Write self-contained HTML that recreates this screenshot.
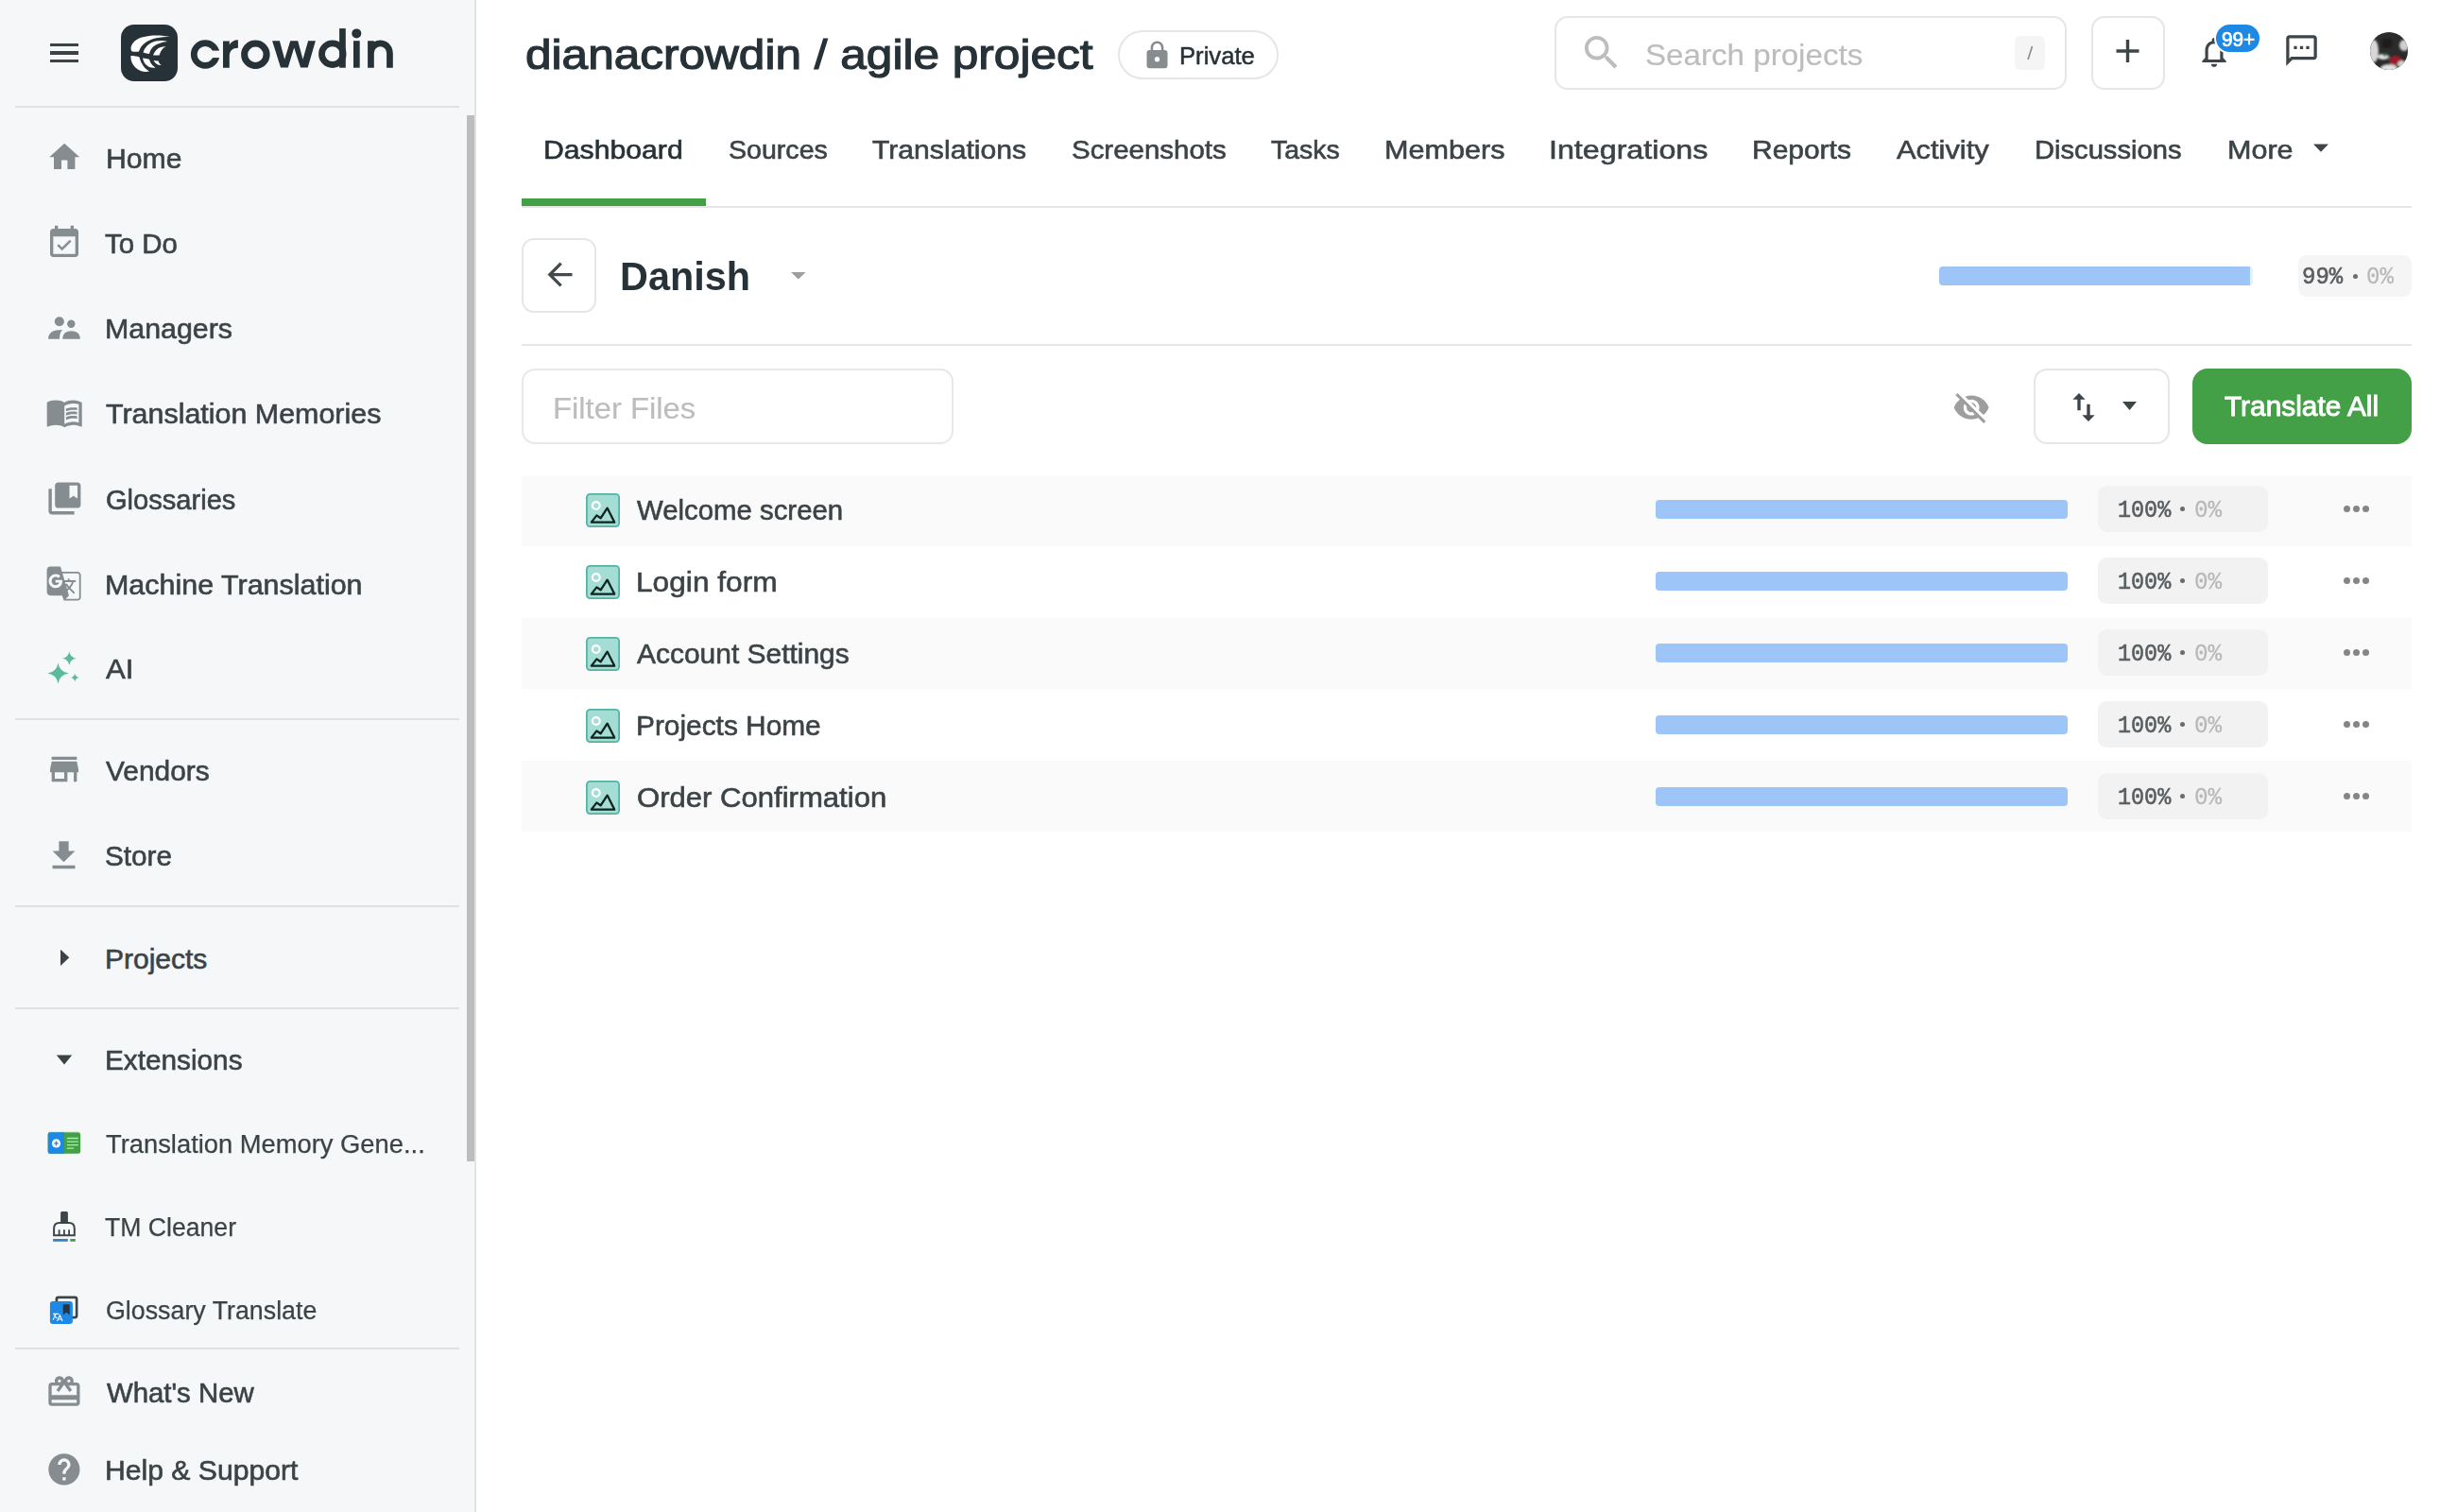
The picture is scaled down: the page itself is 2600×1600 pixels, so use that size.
<!DOCTYPE html>
<html><head><meta charset="utf-8">
<style>
html,body{margin:0;padding:0;width:2600px;height:1600px;overflow:hidden;background:#fff;font-family:"Liberation Sans",sans-serif}
.a{position:absolute}
.tx{position:absolute;white-space:pre;transform-origin:0 0}
svg{position:absolute;overflow:visible}
</style></head><body>
<!-- sidebar -->
<div class="a" style="left:0;top:0;width:502px;height:1600px;background:#f5f7f8"></div>
<div class="a" style="left:502px;top:0;width:2px;height:1600px;background:#e0e2e3"></div>
<div class="a" style="left:494px;top:122px;width:8px;height:1107px;background:#bdbdbd"></div>
<!-- separators -->
<div class="a" style="left:16px;top:112px;width:470px;height:2px;background:#dfe1e3"></div>
<div class="a" style="left:16px;top:760px;width:470px;height:2px;background:#dfe1e3"></div>
<div class="a" style="left:16px;top:958px;width:470px;height:2px;background:#dfe1e3"></div>
<div class="a" style="left:16px;top:1066px;width:470px;height:2px;background:#dfe1e3"></div>
<div class="a" style="left:16px;top:1426px;width:470px;height:2px;background:#dfe1e3"></div>
<!-- hamburger -->
<div class="a" style="left:53px;top:46px;width:30px;height:3px;background:#3b4347"></div>
<div class="a" style="left:53px;top:54.3px;width:30px;height:3.3px;background:#3b4347"></div>
<div class="a" style="left:53px;top:63px;width:30px;height:3px;background:#3b4347"></div>
<!-- logo -->
<svg style="left:128px;top:26px" width="60" height="60" viewBox="0 0 60 60">
<rect width="60" height="60" rx="14" fill="#263238"/>
<g fill="#fff">
<path d="M11,28 C9,22 14,16 22,13.5 C32,10.5 44,11 52,13 C42,13 32,14.5 26,19 C22,22 20,25 19,28.5 C16,29 13,29 11,28 Z"/>
<path d="M10.5,33 C14,33 17,33.5 19.5,34.5 C21,40 24,46 30,49.5 C26,50.5 20,50 16,46 C11.5,42 10,37 10.5,33 Z"/>
<path d="M23.5,29.5 C25,24 30,19 37,17.5 C42,16.5 46,17 49,18 C44,18.5 38,20 34,23.5 C31.5,26 30.5,28.5 30,31 C28,30.8 25.5,30.3 23.5,29.5 Z"/>
<path d="M23,35.5 C25.5,35.8 28,36.3 30,36.8 C31,41 33.5,44 36.5,45.5 C33,46.5 29,45 26.5,42.5 C24.5,40.5 23.5,38 23,35.5 Z"/>
<path d="M34,32.5 C35.5,28 38.5,25 42,24 C44,23.2 46,23 47.5,23.2 C44.5,24.5 42,27.5 40.5,32.5 Z"/>
<path d="M34.5,38 L39.5,38.5 C40.5,41 41.5,42.5 43,43 C40,43.5 36,41.5 34.5,38 Z"/>
</g></svg>
<svg style="left:0;top:0" width="1" height="1"><g fill="#263238">
<circle cx="217.2" cy="57.5" r="11.95" fill="none" stroke="#263238" stroke-width="6.7"/>
<rect x="220" y="53.6" width="14" height="7.5" fill="#f5f7f8"/>
<path d="M236,71.8 V43.4 H242.8 V47.6 C244.6,44.2 247.6,42.2 251.9,42.2 V50.8 C246,50.8 242.8,53.8 242.8,59.5 V71.8 Z"/>
<circle cx="270.35" cy="57.7" r="11.72" fill="none" stroke="#263238" stroke-width="7.05"/>
<path d="M288.1,43.2 L295.9,43.2 L301.2,62.8 L307.2,43.2 L315.2,43.2 L320.5,62.8 L326.1,43.2 L333.9,43.2 L325.7,71.6 L318.1,71.6 L311.2,50.5 L304.8,71.6 L297,71.6 Z"/>
<circle cx="351.8" cy="57.2" r="11.3" fill="none" stroke="#263238" stroke-width="6.8"/>
<rect x="359.1" y="30.1" width="6.7" height="41.6"/>
<rect x="374" y="43.2" width="6.7" height="28.5"/><circle cx="377.3" cy="35.4" r="5"/>
<path d="M389.1,43.2 H395.8 V44.3 A13.35,13.35 0 0 1 415.8,55.9 V71.7 H409.1 V55.9 A6.65,6.65 0 0 0 395.8,55.9 V71.7 H389.1 Z"/>
</g></svg>
<!-- sidebar icons -->
<svg style="left:48.8px;top:147.2px" width="38.4" height="38.4" viewBox="0 0 24 24"><path fill="#858d91" d="M10 20v-6h4v6h5v-8h3L12 3 2 12h3v8z"/></svg>
<svg style="left:48px;top:236.8px" width="40" height="40" viewBox="0 0 24 24"><path fill="#858d91" d="M16.53 11.06L15.47 10l-4.88 4.88-2.12-2.12-1.06 1.06L10.59 17l5.94-5.94zM19 3h-1V1h-2v2H8V1H6v2H5c-1.11 0-1.99.9-1.99 2L3 19c0 1.1.89 2 2 2h14c1.1 0 2-.9 2-2V5c0-1.1-.9-2-2-2zm0 16H5V8h14v11z"/></svg>
<svg style="left:0;top:0" width="1" height="1"><g fill="#858d91"><circle cx="62.8" cy="340.2" r="5"/><circle cx="75.3" cy="342.8" r="4.2"/><path d="M51.1,358.7 C51.1,352 56,349 66,349 C63.5,351.5 63,355 63,358.7 Z"/><path d="M66.2,358.7 C66.2,353 70,350.2 75.5,350.2 C81,350.2 84.8,353 84.8,358.7 Z"/></g></svg>
<svg style="left:48.3px;top:416px" width="40.4" height="40.4" viewBox="0 0 24 24"><path fill="#858d91" d="M21 5c-1.11-.35-2.33-.5-3.5-.5-1.950 0-4.05.4-5.5 1.5-1.45-1.1-3.55-1.5-5.5-1.5S2.45 4.9 1 6v14.65c0 .25.25.5.5.5.1 0 .15-.05.25-.05C3.1 20.450 5.050 20 6.500 20c1.95 0 4.05.4 5.5 1.5 1.35-.85 3.8-1.5 5.5-1.5 1.65 0 3.35.3 4.75 1.050.1.050.15.050.25.050.25 0 .5-.25.5-.5V6c-.6-.45-1.25-.75-2-1zm0 13.5c-1.1-.35-2.3-.5-3.5-.5-1.7 0-4.15.65-5.5 1.5V8c1.35-.85 3.8-1.5 5.5-1.5 1.2 0 2.4.15 3.5.5v11.5zM17.5 10.5c.88 0 1.73.09 2.5.26V9.24c-.79-.15-1.64-.24-2.5-.24-1.7 0-3.24.29-4.5.83v1.66c1.13-.64 2.7-.99 4.5-.99zM13 12.49v1.66c1.13-.64 2.7-.99 4.5-.99.88 0 1.73.09 2.5.26V11.9c-.79-.15-1.64-.24-2.5-.24-1.7 0-3.24.3-4.5.83zM17.5 14.33c-1.7 0-3.24.29-4.5.83v1.66c1.13-.64 2.7-.99 4.5-.99.88 0 1.73.09 2.5.26v-1.52c-.79-.16-1.64-.24-2.5-.24z"/></svg>
<svg style="left:47.6px;top:506.6px" width="40.8" height="40.8" viewBox="0 0 24 24"><path fill="#858d91" d="M4 6H2v14c0 1.1.9 2 2 2h14v-2H4V6zm16-4H8c-1.1 0-2 .9-2 2v12c0 1.1.9 2 2 2h12c1.1 0 2-.9 2-2V4c0-1.1-.9-2-2-2zm0 10l-2.5-1.5L15 12V4h5v8z"/></svg>
<svg style="left:46.4px;top:595.6px" width="43.2" height="43.2" viewBox="0 0 24 24"><path fill="#858d91" d="M20 5h-9.12L10 2H4c-1.1 0-2 .9-2 2v13c0 1.1.9 2 2 2h7l1 3h8c1.1 0 2-.9 2-2V7c0-1.1-.9-2-2-2zM7.17 14.59c-2.25 0-4.09-1.83-4.09-4.09s1.83-4.090 4.09-4.09c1.04 0 1.99.37 2.74 1.07l.07.06-1.23 1.18-.06-.05c-.29-.27-.78-.59-1.52-.59-1.31 0-2.38 1.09-2.38 2.42s1.07 2.42 2.38 2.42c1.37 0 1.96-.87 2.12-1.46H7.08V9.91h3.95l.01.07c.04.21.05.4.05.61 0 2.35-1.61 4-3.92 4zm6.03-1.71c.33.6.74 1.18 1.19 1.7l-.54.53-.65-2.23zm.77-.76h-.99l-.31-1.04h3.99s-.34 1.31-1.56 2.74c-.52-.62-.89-1.23-1.13-1.7zM21 20c0 .55-.45 1-1 1h-7l2-2-.81-2.77.92-.92L17.79 18l.73-.73-2.71-2.68c.9-1.03 1.6-2.25 1.92-3.51H19v-1.04h-3.64V9h-1.04v1.04h-1.96L11.18 6H20c.55 0 1 .45 1 1v13z"/></svg>
<svg style="left:0;top:0" width="1" height="1"><g fill="#5cb99b">
<path d="M61.5,701.4 Q63,711 72.8,712.4 Q63,713.8 61.5,723.4 Q60,713.8 50.3,712.4 Q60,711 61.5,701.4 Z"/>
<path d="M73.3,689.5 Q74.3,695.8 80.7,696.8 Q74.3,697.8 73.3,704 Q72.3,697.8 66,696.8 Q72.3,695.8 73.3,689.5 Z"/>
<path d="M79.2,712.5 Q79.8,716.3 83.6,716.9 Q79.8,717.5 79.2,721.3 Q78.6,717.5 74.9,716.9 Q78.6,716.3 79.2,712.5 Z"/>
</g></svg>
<svg style="left:48px;top:794.3px" width="40" height="40" viewBox="0 0 24 24"><path fill="#858d91" d="M20 4H4v2h16V4zm1 10v-2l-1-5H4l-1 5v2h1v6h10v-6h4v6h2v-6h1zm-9 4H6v-4h6v4z"/></svg>
<svg style="left:47.4px;top:884.5px" width="41" height="41" viewBox="0 0 24 24"><path fill="#858d91" d="M19 9h-4V3H9v6H5l7 7 7-7zM5 18v2h14v-2H5z"/></svg>
<svg style="left:0;top:0" width="1" height="1"><path fill="#3b4347" d="M64,1004.7 L73.3,1013.3 L64,1022 Z"/><path fill="#3b4347" d="M59.8,1116.6 L76.2,1116.6 L68,1126.4 Z"/></svg>
<!-- extension icons -->
<svg style="left:0;top:0" width="1" height="1">
<rect x="50.7" y="1198.3" width="34.4" height="22.4" rx="2.2" fill="#43a047"/>
<path d="M52.9,1198.3 H67.9 V1220.7 H52.9 A2.2,2.2 0 0 1 50.7,1218.5 V1200.5 A2.2,2.2 0 0 1 52.9,1198.3 Z" fill="#1e88e5"/>
<path d="M51.5,1197.6 H84.3" stroke="#cfe3cf" stroke-width="1" opacity="0.6"/>
<circle cx="59.5" cy="1209.9" r="4.6" fill="#f2fbff"/><path d="M57.3,1209.9 h4.4 M59.5,1207.6 v4.6" stroke="#3a7bc8" stroke-width="1.3"/>
<path d="M70.9,1204.5 h11.9 M70.9,1208.2 h11.9 M70.9,1211.6 h11.9 M70.9,1215.1 h7.1" stroke="#a8f0a3" stroke-width="1.3"/>
</svg>
<svg style="left:0;top:0" width="1" height="1">
<rect x="64.1" y="1282" width="7.8" height="12" rx="1.5" fill="#3c4547"/>
<path d="M57.1,1307.3 V1300 C57.1,1296 59.5,1293.9 63,1293.9 H73 C76.5,1293.9 78.8,1296 78.8,1300 V1307.3 Z" fill="#f7f9fa" stroke="#3c4547" stroke-width="2"/>
<path d="M62.6,1307 v-5.8 M67.9,1307 v-5.8 M73.1,1307 v-5.8" stroke="#3c4547" stroke-width="1.8"/>
<rect x="56.1" y="1311" width="15.7" height="2.8" fill="#3a82bf"/><rect x="74.3" y="1311" width="5.5" height="2.8" fill="#4e9a52"/>
</svg>
<svg style="left:0;top:0" width="1" height="1">
<rect x="59.9" y="1372.9" width="21.2" height="21.2" rx="1.8" fill="#fff" stroke="#3c4547" stroke-width="2.7"/>
<rect x="52.9" y="1377.1" width="24" height="23.9" rx="3" fill="#1e88e5"/>
<path d="M66.7,1380.2 h7 v11.4 l-3.5,-2.8 l-3.5,2.8 Z" fill="#263545"/>
<path d="M56,1390.3 h6.2 M59.1,1390.3 l-3,6.5 M57,1392 l3.2,3 M60.5,1398 l2.8,-6.2 l2.8,6.2 M61.5,1396 h3.6" stroke="#e8f6ff" stroke-width="1.2" fill="none"/>
</svg>
<svg style="left:48px;top:1453.2px" width="39.8" height="39.8" viewBox="0 0 24 24"><path fill="#858d91" d="M20 6h-2.18c.11-.31.18-.65.18-1 0-1.66-1.34-3-3-3-1.05 0-1.96.54-2.5 1.35l-.5.67-.5-.68C10.96 2.54 10.05 2 9 2 7.34 2 6 3.34 6 5c0 .35.07.69.18 1H4c-1.11 0-1.99.89-1.99 2L2 19c0 1.11.89 2 2 2h16c1.11 0 2-.89 2-2V8c0-1.110-.89-2-2-2zm-5-2c.55 0 1 .45 1 1s-.45 1-1 1-1-.45-1-1 .45-1 1-1zM9 4c.55 0 1 .45 1 1s-.45 1-1 1-1-.45-1-1 .45-1 1-1zm11 15H4v-2h16v2zm0-5H4V8h5.08L7 10.83 8.62 12 11 8.76l1-1.36 1 1.36L15.38 12 17 10.83 14.92 8H20v6z"/></svg>
<svg style="left:48px;top:1535px" width="39.8" height="39.8" viewBox="0 0 24 24"><path fill="#858d91" d="M12 2C6.48 2 2 6.48 2 12s4.48 10 10 10 10-4.48 10-10S17.52 2 12 2zm1 17h-2v-2h2v2zm2.07-7.75l-.9.92C13.45 12.9 13 13.5 13 15h-2v-.5c0-1.1.45-2.1 1.17-2.830l1.24-1.26c.37-.36.59-.86.59-1.41 0-1.1-.9-2-2-2s-2 .9-2 2H8c0-2.21 1.79-4 4-4s4 1.79 4 4c0 .88-.36 1.68-.93 2.25z"/></svg>

<!-- header -->
<div class="a" style="left:1183px;top:32px;width:166px;height:48px;border:2px solid #e6e6e6;border-radius:26px"></div>
<svg style="left:1207.7px;top:41.8px" width="33" height="33" viewBox="0 0 24 24"><path fill="#878c8e" d="M18 8h-1V6c0-2.76-2.24-5-5-5S7 3.24 7 6v2H6c-1.1 0-2 .9-2 2v10c0 1.1.9 2 2 2h12c1.1 0 2-.9 2-2V10c0-1.1-.9-2-2-2zm-6 9c-1.1 0-2-.9-2-2s.9-2 2-2 2 .9 2 2-.9 2-2 2zm3.1-9H8.9V6c0-1.71 1.39-3.1 3.1-3.1 1.71 0 3.1 1.39 3.1 3.1v2z"/></svg>
<div class="a" style="left:1645px;top:17px;width:538px;height:74px;border:2px solid #e6e6e6;border-radius:14px"></div>
<svg style="left:1671px;top:31.9px" width="47.3" height="47.3" viewBox="0 0 24 24"><path fill="#bdbdbd" d="M15.5 14h-.79l-.28-.27C15.41 12.59 16 11.11 16 9.5 16 5.91 13.09 3 9.5 3S3 5.91 3 9.5 5.91 16 9.5 16c1.61 0 3.09-.59 4.23-1.57l.27.28v.79l5 4.99L20.49 19l-4.99-5zm-6 0C7.01 14 5 11.99 5 9.5S7.01 5 9.5 5 14 7.01 14 9.5 11.99 14 9.5 14z"/></svg>
<div class="a" style="left:2132px;top:38px;width:32px;height:36px;background:#f5f5f5;border-radius:6px"></div>
<svg style="left:0;top:0" width="1" height="1"><path d="M2150.5,49 L2146,63" stroke="#8a8a8a" stroke-width="1.6"/></svg>
<div class="a" style="left:2212.5px;top:17px;width:74.5px;height:74px;border:2px solid #e6e6e6;border-radius:14px"></div>
<svg style="left:0;top:0" width="1" height="1"><path d="M2251.5,42 v24 M2239.5,54 h24" stroke="#3d4548" stroke-width="3.4"/></svg>
<svg style="left:2323.6px;top:36px" width="38" height="38" viewBox="0 0 24 24"><path fill="#3d4548" d="M12 22c1.1 0 2-.9 2-2h-4c0 1.1.9 2 2 2zm6-6v-5c0-3.07-1.64-5.64-4.5-6.32V4c0-.83-.67-1.5-1.5-1.5s-1.5.67-1.5 1.5v.68C7.63 5.36 6 7.92 6 11v5l-2 2v1h16v-1l-2-2zm-2 1H8v-6c0-2.48 1.51-4.5 4-4.5s4 2.02 4 4.5v6z"/></svg>
<div class="a" style="left:2343px;top:24px;width:50px;height:33px;background:#fff;border-radius:17px"></div>
<div class="a" style="left:2345px;top:26px;width:46px;height:29px;background:#1e88e5;border-radius:15px"></div>
<svg style="left:2415.8px;top:34.2px" width="39" height="39" viewBox="0 0 24 24"><path fill="#3d4548" d="M20 2H4c-1.1 0-1.99.9-1.99 2L2 22l4-4h14c1.1 0 2-.9 2-2V4c0-1.1-.9-2-2-2zm0 14H5.17l-.59.59-.58.58V4h16v12zM7 9h2v2H7zm4 0h2v2h-2zm4 0h2v2h-2z"/></svg>
<svg style="left:2508px;top:34px" width="40" height="40" viewBox="0 0 40 40"><defs><clipPath id="avc"><circle cx="20" cy="20" r="20"/></clipPath><filter id="avb"><feGaussianBlur stdDeviation="1.2"/></filter></defs><g clip-path="url(#avc)"><rect width="40" height="40" fill="#2b2b2b"/><g filter="url(#avb)"><ellipse cx="4" cy="20" rx="5" ry="12" fill="#d8d8d8"/><ellipse cx="14" cy="26" rx="6" ry="3" fill="#e6e6e6"/><ellipse cx="36" cy="14" rx="5" ry="6" fill="#cfcfcf"/><ellipse cx="27" cy="30" rx="7" ry="5" fill="#9a1f2a"/><ellipse cx="20" cy="38" rx="9" ry="4" fill="#e0e0e0"/><ellipse cx="34" cy="34" rx="5" ry="4" fill="#d0d0d0"/><ellipse cx="18" cy="12" rx="6" ry="5" fill="#1a1a1a"/><ellipse cx="16" cy="24" rx="3" ry="1.5" fill="#3b7a4a"/></g></g></svg>
<!-- tabs -->
<div class="a" style="left:552px;top:218px;width:2000px;height:2px;background:#e6e6e6"></div>
<div class="a" style="left:552px;top:210px;width:195px;height:8px;background:#43a047"></div>
<svg style="left:0;top:0" width="1" height="1"><path fill="#3d4548" d="M2448,152.6 L2464,152.6 L2456,160.8 Z"/></svg>
<!-- danish row -->
<div class="a" style="left:552px;top:252px;width:75px;height:75px;border:2px solid #e6e6e6;border-radius:13px"></div>
<svg style="left:572.5px;top:270.5px" width="39" height="39" viewBox="0 0 24 24"><path fill="#424a4e" d="M20 11H7.830l5.59-5.59L12 4l-8 8 8 8 1.41-1.41L7.83 13H20v-2z"/></svg>
<svg style="left:0;top:0" width="1" height="1"><path fill="#9e9e9e" d="M837,288 L852.6,288 L844.8,295.6 Z"/></svg>
<div class="a" style="left:2052px;top:282px;width:332px;height:20px;background:#e4f3fb;border-radius:4px"></div><div class="a" style="left:2052px;top:282px;width:329px;height:20px;background:#9ec5f7;border-radius:4px 0 0 4px"></div>
<div class="a" style="left:2432px;top:270px;width:120px;height:44px;background:#f5f5f5;border-radius:9px"></div>
<div class="a" style="left:2490px;top:290px;width:5px;height:5px;background:#6b6b6b;border-radius:50%"></div>
<div class="a" style="left:552px;top:364px;width:2000px;height:2px;background:#e6e6e6"></div>
<!-- filter row -->
<div class="a" style="left:552px;top:390px;width:453px;height:76px;border:2px solid #e8e8e8;border-radius:14px"></div>
<svg style="left:2066.3px;top:411px" width="40.3" height="40.3" viewBox="0 0 24 24"><path fill="#9e9e9e" d="M12 7c2.76 0 5 2.24 5 5 0 .65-.13 1.26-.36 1.83l2.92 2.92c1.51-1.26 2.7-2.89 3.43-4.75-1.73-4.39-6-7.5-10.99-7.5-1.4 0-2.74.25-3.98.7l2.16 2.16C10.74 7.13 11.35 7 12 7zM2 4.27l2.28 2.28.46.46C3.08 8.3 1.78 10.02 1 12c1.73 4.39 6 7.5 11 7.5 1.55 0 3.03-.3 4.38-.84l.42.42L19.73 22 21 20.73 3.27 3 2 4.27zM7.53 9.8l1.55 1.55c-.05.21-.08.43-.08.65 0 1.66 1.34 3 3 3 .22 0 .44-.03.65-.08l1.55 1.55c-.67.33-1.41.53-2.2.53-2.76 0-5-2.24-5-5 0-.79.2-1.53.53-2.2zm4.31-.78l3.15 3.15.02-.16c0-1.66-1.34-3-3-3l-.17.01z"/></svg>
<div class="a" style="left:2152px;top:390px;width:140px;height:76px;border:2px solid #e6e6e6;border-radius:14px"></div>
<svg style="left:2185px;top:411px" width="40" height="40" viewBox="0 0 24 24"><path fill="#3d4548" d="M16 17.01V10h-2v7.01h-3L15 21l4-3.99h-3zM9 3L5 6.99h3V14h2V6.99h3L9 3z"/></svg>
<svg style="left:0;top:0" width="1" height="1"><path fill="#3d4548" d="M2246,425 L2261,425 L2253.5,434 Z"/></svg>
<div class="a" style="left:2320px;top:390px;width:232px;height:80px;background:#43a047;border-radius:16px"></div>
<!-- rows -->
<div class="a" style="left:552px;top:504px;width:2000px;height:74px;background:#fafafa"></div>
<div class="a" style="left:552px;top:654px;width:2000px;height:75px;background:#fafafa"></div>
<div class="a" style="left:552px;top:805px;width:2000px;height:75px;background:#fafafa"></div>
<svg style="left:620px;top:522px" width="36" height="36" viewBox="0 0 36 36"><rect x="0.9" y="0.9" width="34.2" height="34.2" rx="3.5" fill="#a3ddd3" stroke="#55b3a6" stroke-width="1.8"/><circle cx="10.8" cy="13" r="3.9" fill="none" stroke="#ffffff" stroke-width="2.2"/><path d="M5.8,30.6 L11.4,23.4 L15.6,26.3 L22.6,15.6 L30.2,30.6 Z" fill="none" stroke="#0f2420" stroke-width="2.3" stroke-linejoin="round"/></svg>
<div class="a" style="left:1752px;top:529px;width:436px;height:20px;background:#9ec5f7;border-radius:4px"></div>
<div class="a" style="left:2220px;top:514px;width:180px;height:49px;background:#f2f2f2;border-radius:9px"></div>
<div class="a" style="left:2307px;top:536px;width:5px;height:5px;background:#6b6b6b;border-radius:50%"></div>
<div class="a" style="left:2480px;top:535px;width:7px;height:7px;background:#858585;border-radius:50%"></div>
<div class="a" style="left:2490px;top:535px;width:7px;height:7px;background:#858585;border-radius:50%"></div>
<div class="a" style="left:2500px;top:535px;width:7px;height:7px;background:#858585;border-radius:50%"></div>
<svg style="left:620px;top:598px" width="36" height="36" viewBox="0 0 36 36"><rect x="0.9" y="0.9" width="34.2" height="34.2" rx="3.5" fill="#a3ddd3" stroke="#55b3a6" stroke-width="1.8"/><circle cx="10.8" cy="13" r="3.9" fill="none" stroke="#ffffff" stroke-width="2.2"/><path d="M5.8,30.6 L11.4,23.4 L15.6,26.3 L22.6,15.6 L30.2,30.6 Z" fill="none" stroke="#0f2420" stroke-width="2.3" stroke-linejoin="round"/></svg>
<div class="a" style="left:1752px;top:605px;width:436px;height:20px;background:#9ec5f7;border-radius:4px"></div>
<div class="a" style="left:2220px;top:590px;width:180px;height:49px;background:#f2f2f2;border-radius:9px"></div>
<div class="a" style="left:2307px;top:612px;width:5px;height:5px;background:#6b6b6b;border-radius:50%"></div>
<div class="a" style="left:2480px;top:611px;width:7px;height:7px;background:#858585;border-radius:50%"></div>
<div class="a" style="left:2490px;top:611px;width:7px;height:7px;background:#858585;border-radius:50%"></div>
<div class="a" style="left:2500px;top:611px;width:7px;height:7px;background:#858585;border-radius:50%"></div>
<svg style="left:620px;top:674px" width="36" height="36" viewBox="0 0 36 36"><rect x="0.9" y="0.9" width="34.2" height="34.2" rx="3.5" fill="#a3ddd3" stroke="#55b3a6" stroke-width="1.8"/><circle cx="10.8" cy="13" r="3.9" fill="none" stroke="#ffffff" stroke-width="2.2"/><path d="M5.8,30.6 L11.4,23.4 L15.6,26.3 L22.6,15.6 L30.2,30.6 Z" fill="none" stroke="#0f2420" stroke-width="2.3" stroke-linejoin="round"/></svg>
<div class="a" style="left:1752px;top:681px;width:436px;height:20px;background:#9ec5f7;border-radius:4px"></div>
<div class="a" style="left:2220px;top:666px;width:180px;height:49px;background:#f2f2f2;border-radius:9px"></div>
<div class="a" style="left:2307px;top:688px;width:5px;height:5px;background:#6b6b6b;border-radius:50%"></div>
<div class="a" style="left:2480px;top:687px;width:7px;height:7px;background:#858585;border-radius:50%"></div>
<div class="a" style="left:2490px;top:687px;width:7px;height:7px;background:#858585;border-radius:50%"></div>
<div class="a" style="left:2500px;top:687px;width:7px;height:7px;background:#858585;border-radius:50%"></div>
<svg style="left:620px;top:750px" width="36" height="36" viewBox="0 0 36 36"><rect x="0.9" y="0.9" width="34.2" height="34.2" rx="3.5" fill="#a3ddd3" stroke="#55b3a6" stroke-width="1.8"/><circle cx="10.8" cy="13" r="3.9" fill="none" stroke="#ffffff" stroke-width="2.2"/><path d="M5.8,30.6 L11.4,23.4 L15.6,26.3 L22.6,15.6 L30.2,30.6 Z" fill="none" stroke="#0f2420" stroke-width="2.3" stroke-linejoin="round"/></svg>
<div class="a" style="left:1752px;top:757px;width:436px;height:20px;background:#9ec5f7;border-radius:4px"></div>
<div class="a" style="left:2220px;top:742px;width:180px;height:49px;background:#f2f2f2;border-radius:9px"></div>
<div class="a" style="left:2307px;top:764px;width:5px;height:5px;background:#6b6b6b;border-radius:50%"></div>
<div class="a" style="left:2480px;top:763px;width:7px;height:7px;background:#858585;border-radius:50%"></div>
<div class="a" style="left:2490px;top:763px;width:7px;height:7px;background:#858585;border-radius:50%"></div>
<div class="a" style="left:2500px;top:763px;width:7px;height:7px;background:#858585;border-radius:50%"></div>
<svg style="left:620px;top:826px" width="36" height="36" viewBox="0 0 36 36"><rect x="0.9" y="0.9" width="34.2" height="34.2" rx="3.5" fill="#a3ddd3" stroke="#55b3a6" stroke-width="1.8"/><circle cx="10.8" cy="13" r="3.9" fill="none" stroke="#ffffff" stroke-width="2.2"/><path d="M5.8,30.6 L11.4,23.4 L15.6,26.3 L22.6,15.6 L30.2,30.6 Z" fill="none" stroke="#0f2420" stroke-width="2.3" stroke-linejoin="round"/></svg>
<div class="a" style="left:1752px;top:833px;width:436px;height:20px;background:#9ec5f7;border-radius:4px"></div>
<div class="a" style="left:2220px;top:818px;width:180px;height:49px;background:#f2f2f2;border-radius:9px"></div>
<div class="a" style="left:2307px;top:840px;width:5px;height:5px;background:#6b6b6b;border-radius:50%"></div>
<div class="a" style="left:2480px;top:839px;width:7px;height:7px;background:#858585;border-radius:50%"></div>
<div class="a" style="left:2490px;top:839px;width:7px;height:7px;background:#858585;border-radius:50%"></div>
<div class="a" style="left:2500px;top:839px;width:7px;height:7px;background:#858585;border-radius:50%"></div>
<div class="tx" style="left:112.0px;top:153.0px;font-size:30px;line-height:30px;font-weight:400;font-family:'Liberation Sans';color:#3b4347;transform:scaleX(1.0052);-webkit-text-stroke:0.6px currentColor">Home</div>
<div class="tx" style="left:111.0px;top:243.2px;font-size:30px;line-height:30px;font-weight:400;font-family:'Liberation Sans';color:#3b4347;transform:scaleX(0.9803);-webkit-text-stroke:0.6px currentColor">To Do</div>
<div class="tx" style="left:111.0px;top:333.0px;font-size:30px;line-height:30px;font-weight:400;font-family:'Liberation Sans';color:#3b4347;transform:scaleX(1.0115);-webkit-text-stroke:0.6px currentColor">Managers</div>
<div class="tx" style="left:112.0px;top:423.0px;font-size:30px;line-height:30px;font-weight:400;font-family:'Liberation Sans';color:#3b4347;transform:scaleX(1.0140);-webkit-text-stroke:0.6px currentColor">Translation Memories</div>
<div class="tx" style="left:112.0px;top:513.5px;font-size:30px;line-height:30px;font-weight:400;font-family:'Liberation Sans';color:#3b4347;transform:scaleX(0.9693);-webkit-text-stroke:0.6px currentColor">Glossaries</div>
<div class="tx" style="left:111.0px;top:603.5px;font-size:30px;line-height:30px;font-weight:400;font-family:'Liberation Sans';color:#3b4347;transform:scaleX(1.0151);-webkit-text-stroke:0.6px currentColor">Machine Translation</div>
<div class="tx" style="left:112.4px;top:693.0px;font-size:30px;line-height:30px;font-weight:400;font-family:'Liberation Sans';color:#3b4347;transform:scaleX(1.0385);-webkit-text-stroke:0.6px currentColor">AI</div>
<div class="tx" style="left:112.4px;top:801.0px;font-size:30px;line-height:30px;font-weight:400;font-family:'Liberation Sans';color:#3b4347;transform:scaleX(0.9963);-webkit-text-stroke:0.6px currentColor">Vendors</div>
<div class="tx" style="left:111.4px;top:891.0px;font-size:30px;line-height:30px;font-weight:400;font-family:'Liberation Sans';color:#3b4347;transform:scaleX(0.9900);-webkit-text-stroke:0.6px currentColor">Store</div>
<div class="tx" style="left:111.0px;top:999.5px;font-size:30px;line-height:30px;font-weight:400;font-family:'Liberation Sans';color:#3b4347;transform:scaleX(1.0000);-webkit-text-stroke:0.6px currentColor">Projects</div>
<div class="tx" style="left:111.0px;top:1106.7px;font-size:30px;line-height:30px;font-weight:400;font-family:'Liberation Sans';color:#3b4347;transform:scaleX(0.9917);-webkit-text-stroke:0.6px currentColor">Extensions</div>
<div class="tx" style="left:111.6px;top:1198.0px;font-size:27px;line-height:27px;font-weight:400;font-family:'Liberation Sans';color:#3b4347;transform:scaleX(1.0124);-webkit-text-stroke:0.25px currentColor">Translation Memory Gene...</div>
<div class="tx" style="left:111.0px;top:1286.3px;font-size:27px;line-height:27px;font-weight:400;font-family:'Liberation Sans';color:#3b4347;transform:scaleX(0.9857);-webkit-text-stroke:0.25px currentColor">TM Cleaner</div>
<div class="tx" style="left:112.0px;top:1374.3px;font-size:27px;line-height:27px;font-weight:400;font-family:'Liberation Sans';color:#3b4347;transform:scaleX(0.9924);-webkit-text-stroke:0.25px currentColor">Glossary Translate</div>
<div class="tx" style="left:112.7px;top:1460.2px;font-size:29px;line-height:29px;font-weight:400;font-family:'Liberation Sans';color:#3b4347;transform:scaleX(1.0123);-webkit-text-stroke:0.6px currentColor">What's New</div>
<div class="tx" style="left:111.2px;top:1542.3px;font-size:29px;line-height:29px;font-weight:400;font-family:'Liberation Sans';color:#3b4347;transform:scaleX(1.0395);-webkit-text-stroke:0.6px currentColor">Help &amp; Support</div>
<div class="tx" style="left:556.2px;top:36.3px;font-size:44px;line-height:44px;font-weight:400;font-family:'Liberation Sans';color:#263238;transform:scaleX(1.1262);-webkit-text-stroke:1.2px currentColor">dianacrowdin / agile project</div>
<div class="tx" style="left:1248.1px;top:46.9px;font-size:25px;line-height:25px;font-weight:400;font-family:'Liberation Sans';color:#263238;transform:scaleX(1.0253);-webkit-text-stroke:0.5px currentColor">Private</div>
<div class="tx" style="left:1740.5px;top:41.9px;font-size:32px;line-height:32px;font-weight:400;font-family:'Liberation Sans';color:#bdbdbd;transform:scaleX(1.0356);-webkit-text-stroke:0.2px currentColor">Search projects</div>
<div class="tx" style="left:575.4px;top:144.6px;font-size:28px;line-height:28px;font-weight:400;font-family:'Liberation Sans';color:#263238;transform:scaleX(1.0782);-webkit-text-stroke:0.6px currentColor">Dashboard</div>
<div class="tx" style="left:770.8px;top:144.6px;font-size:28px;line-height:28px;font-weight:400;font-family:'Liberation Sans';color:#3b4347;transform:scaleX(1.0208);-webkit-text-stroke:0.6px currentColor">Sources</div>
<div class="tx" style="left:923.3px;top:144.6px;font-size:28px;line-height:28px;font-weight:400;font-family:'Liberation Sans';color:#3b4347;transform:scaleX(1.0767);-webkit-text-stroke:0.6px currentColor">Translations</div>
<div class="tx" style="left:1133.9px;top:144.6px;font-size:28px;line-height:28px;font-weight:400;font-family:'Liberation Sans';color:#3b4347;transform:scaleX(1.0519);-webkit-text-stroke:0.6px currentColor">Screenshots</div>
<div class="tx" style="left:1345.0px;top:144.6px;font-size:28px;line-height:28px;font-weight:400;font-family:'Liberation Sans';color:#3b4347;transform:scaleX(1.0143);-webkit-text-stroke:0.6px currentColor">Tasks</div>
<div class="tx" style="left:1465.3px;top:144.6px;font-size:28px;line-height:28px;font-weight:400;font-family:'Liberation Sans';color:#3b4347;transform:scaleX(1.0921);-webkit-text-stroke:0.6px currentColor">Members</div>
<div class="tx" style="left:1638.7px;top:144.6px;font-size:28px;line-height:28px;font-weight:400;font-family:'Liberation Sans';color:#3b4347;transform:scaleX(1.1503);-webkit-text-stroke:0.6px currentColor">Integrations</div>
<div class="tx" style="left:1854.3px;top:144.6px;font-size:28px;line-height:28px;font-weight:400;font-family:'Liberation Sans';color:#3b4347;transform:scaleX(1.0695);-webkit-text-stroke:0.6px currentColor">Reports</div>
<div class="tx" style="left:2007.0px;top:144.6px;font-size:28px;line-height:28px;font-weight:400;font-family:'Liberation Sans';color:#3b4347;transform:scaleX(1.1011);-webkit-text-stroke:0.6px currentColor">Activity</div>
<div class="tx" style="left:2152.9px;top:144.6px;font-size:28px;line-height:28px;font-weight:400;font-family:'Liberation Sans';color:#3b4347;transform:scaleX(1.0408);-webkit-text-stroke:0.6px currentColor">Discussions</div>
<div class="tx" style="left:2357.1px;top:144.6px;font-size:28px;line-height:28px;font-weight:400;font-family:'Liberation Sans';color:#3b4347;transform:scaleX(1.0902);-webkit-text-stroke:0.6px currentColor">More</div>
<div class="tx" style="left:656.0px;top:272.0px;font-size:42px;line-height:42px;font-weight:700;font-family:'Liberation Sans';color:#263238;transform:scaleX(0.9852);">Danish</div>
<div class="tx" style="left:2435.9px;top:280.0px;font-size:26px;line-height:26px;font-weight:400;font-family:'Liberation Mono';color:#585d60;transform:scaleX(0.9222);-webkit-text-stroke:0.6px currentColor">99%</div>
<div class="tx" style="left:2504.2px;top:280.0px;font-size:26px;line-height:26px;font-weight:400;font-family:'Liberation Mono';color:#b8b8b8;transform:scaleX(0.9276);-webkit-text-stroke:0.3px currentColor">0%</div>
<div class="tx" style="left:584.9px;top:415.8px;font-size:32px;line-height:32px;font-weight:400;font-family:'Liberation Sans';color:#bdbdbd;transform:scaleX(1.0250);-webkit-text-stroke:0.2px currentColor">Filter Files</div>
<div class="tx" style="left:2353.8px;top:416.3px;font-size:29px;line-height:29px;font-weight:400;font-family:'Liberation Sans';color:#ffffff;transform:scaleX(1.0288);-webkit-text-stroke:0.9px currentColor">Translate All</div>
<div class="tx" style="left:674.4px;top:525.3px;font-size:30px;line-height:30px;font-weight:400;font-family:'Liberation Sans';color:#3b4347;transform:scaleX(0.9787);-webkit-text-stroke:0.6px currentColor">Welcome screen</div>
<div class="tx" style="left:2240.6px;top:526.8px;font-size:26px;line-height:26px;font-weight:400;font-family:'Liberation Mono';color:#585d60;transform:scaleX(0.9000);-webkit-text-stroke:0.6px currentColor">100%</div>
<div class="tx" style="left:2322.1px;top:526.8px;font-size:26px;line-height:26px;font-weight:400;font-family:'Liberation Mono';color:#b8b8b8;transform:scaleX(0.9345);-webkit-text-stroke:0.3px currentColor">0%</div>
<div class="tx" style="left:673.2px;top:601.3px;font-size:30px;line-height:30px;font-weight:400;font-family:'Liberation Sans';color:#3b4347;transform:scaleX(1.0558);-webkit-text-stroke:0.6px currentColor">Login form</div>
<div class="tx" style="left:2240.6px;top:602.8px;font-size:26px;line-height:26px;font-weight:400;font-family:'Liberation Mono';color:#585d60;transform:scaleX(0.9000);-webkit-text-stroke:0.6px currentColor">100%</div>
<div class="tx" style="left:2322.1px;top:602.8px;font-size:26px;line-height:26px;font-weight:400;font-family:'Liberation Mono';color:#b8b8b8;transform:scaleX(0.9345);-webkit-text-stroke:0.3px currentColor">0%</div>
<div class="tx" style="left:674.4px;top:677.3px;font-size:30px;line-height:30px;font-weight:400;font-family:'Liberation Sans';color:#3b4347;transform:scaleX(0.9982);-webkit-text-stroke:0.6px currentColor">Account Settings</div>
<div class="tx" style="left:2240.6px;top:678.8px;font-size:26px;line-height:26px;font-weight:400;font-family:'Liberation Mono';color:#585d60;transform:scaleX(0.9000);-webkit-text-stroke:0.6px currentColor">100%</div>
<div class="tx" style="left:2322.1px;top:678.8px;font-size:26px;line-height:26px;font-weight:400;font-family:'Liberation Mono';color:#b8b8b8;transform:scaleX(0.9345);-webkit-text-stroke:0.3px currentColor">0%</div>
<div class="tx" style="left:673.0px;top:753.3px;font-size:30px;line-height:30px;font-weight:400;font-family:'Liberation Sans';color:#3b4347;transform:scaleX(0.9948);-webkit-text-stroke:0.6px currentColor">Projects Home</div>
<div class="tx" style="left:2240.6px;top:754.8px;font-size:26px;line-height:26px;font-weight:400;font-family:'Liberation Mono';color:#585d60;transform:scaleX(0.9000);-webkit-text-stroke:0.6px currentColor">100%</div>
<div class="tx" style="left:2322.1px;top:754.8px;font-size:26px;line-height:26px;font-weight:400;font-family:'Liberation Mono';color:#b8b8b8;transform:scaleX(0.9345);-webkit-text-stroke:0.3px currentColor">0%</div>
<div class="tx" style="left:674.0px;top:829.3px;font-size:30px;line-height:30px;font-weight:400;font-family:'Liberation Sans';color:#3b4347;transform:scaleX(1.0357);-webkit-text-stroke:0.6px currentColor">Order Confirmation</div>
<div class="tx" style="left:2240.6px;top:830.8px;font-size:26px;line-height:26px;font-weight:400;font-family:'Liberation Mono';color:#585d60;transform:scaleX(0.9000);-webkit-text-stroke:0.6px currentColor">100%</div>
<div class="tx" style="left:2322.1px;top:830.8px;font-size:26px;line-height:26px;font-weight:400;font-family:'Liberation Mono';color:#b8b8b8;transform:scaleX(0.9345);-webkit-text-stroke:0.3px currentColor">0%</div>
<div class="tx" style="left:2350.6px;top:30.5px;font-size:22px;line-height:22px;font-weight:400;font-family:'Liberation Sans';color:#ffffff;transform:scaleX(0.9429);-webkit-text-stroke:0.7px currentColor">99+</div>
</body></html>
